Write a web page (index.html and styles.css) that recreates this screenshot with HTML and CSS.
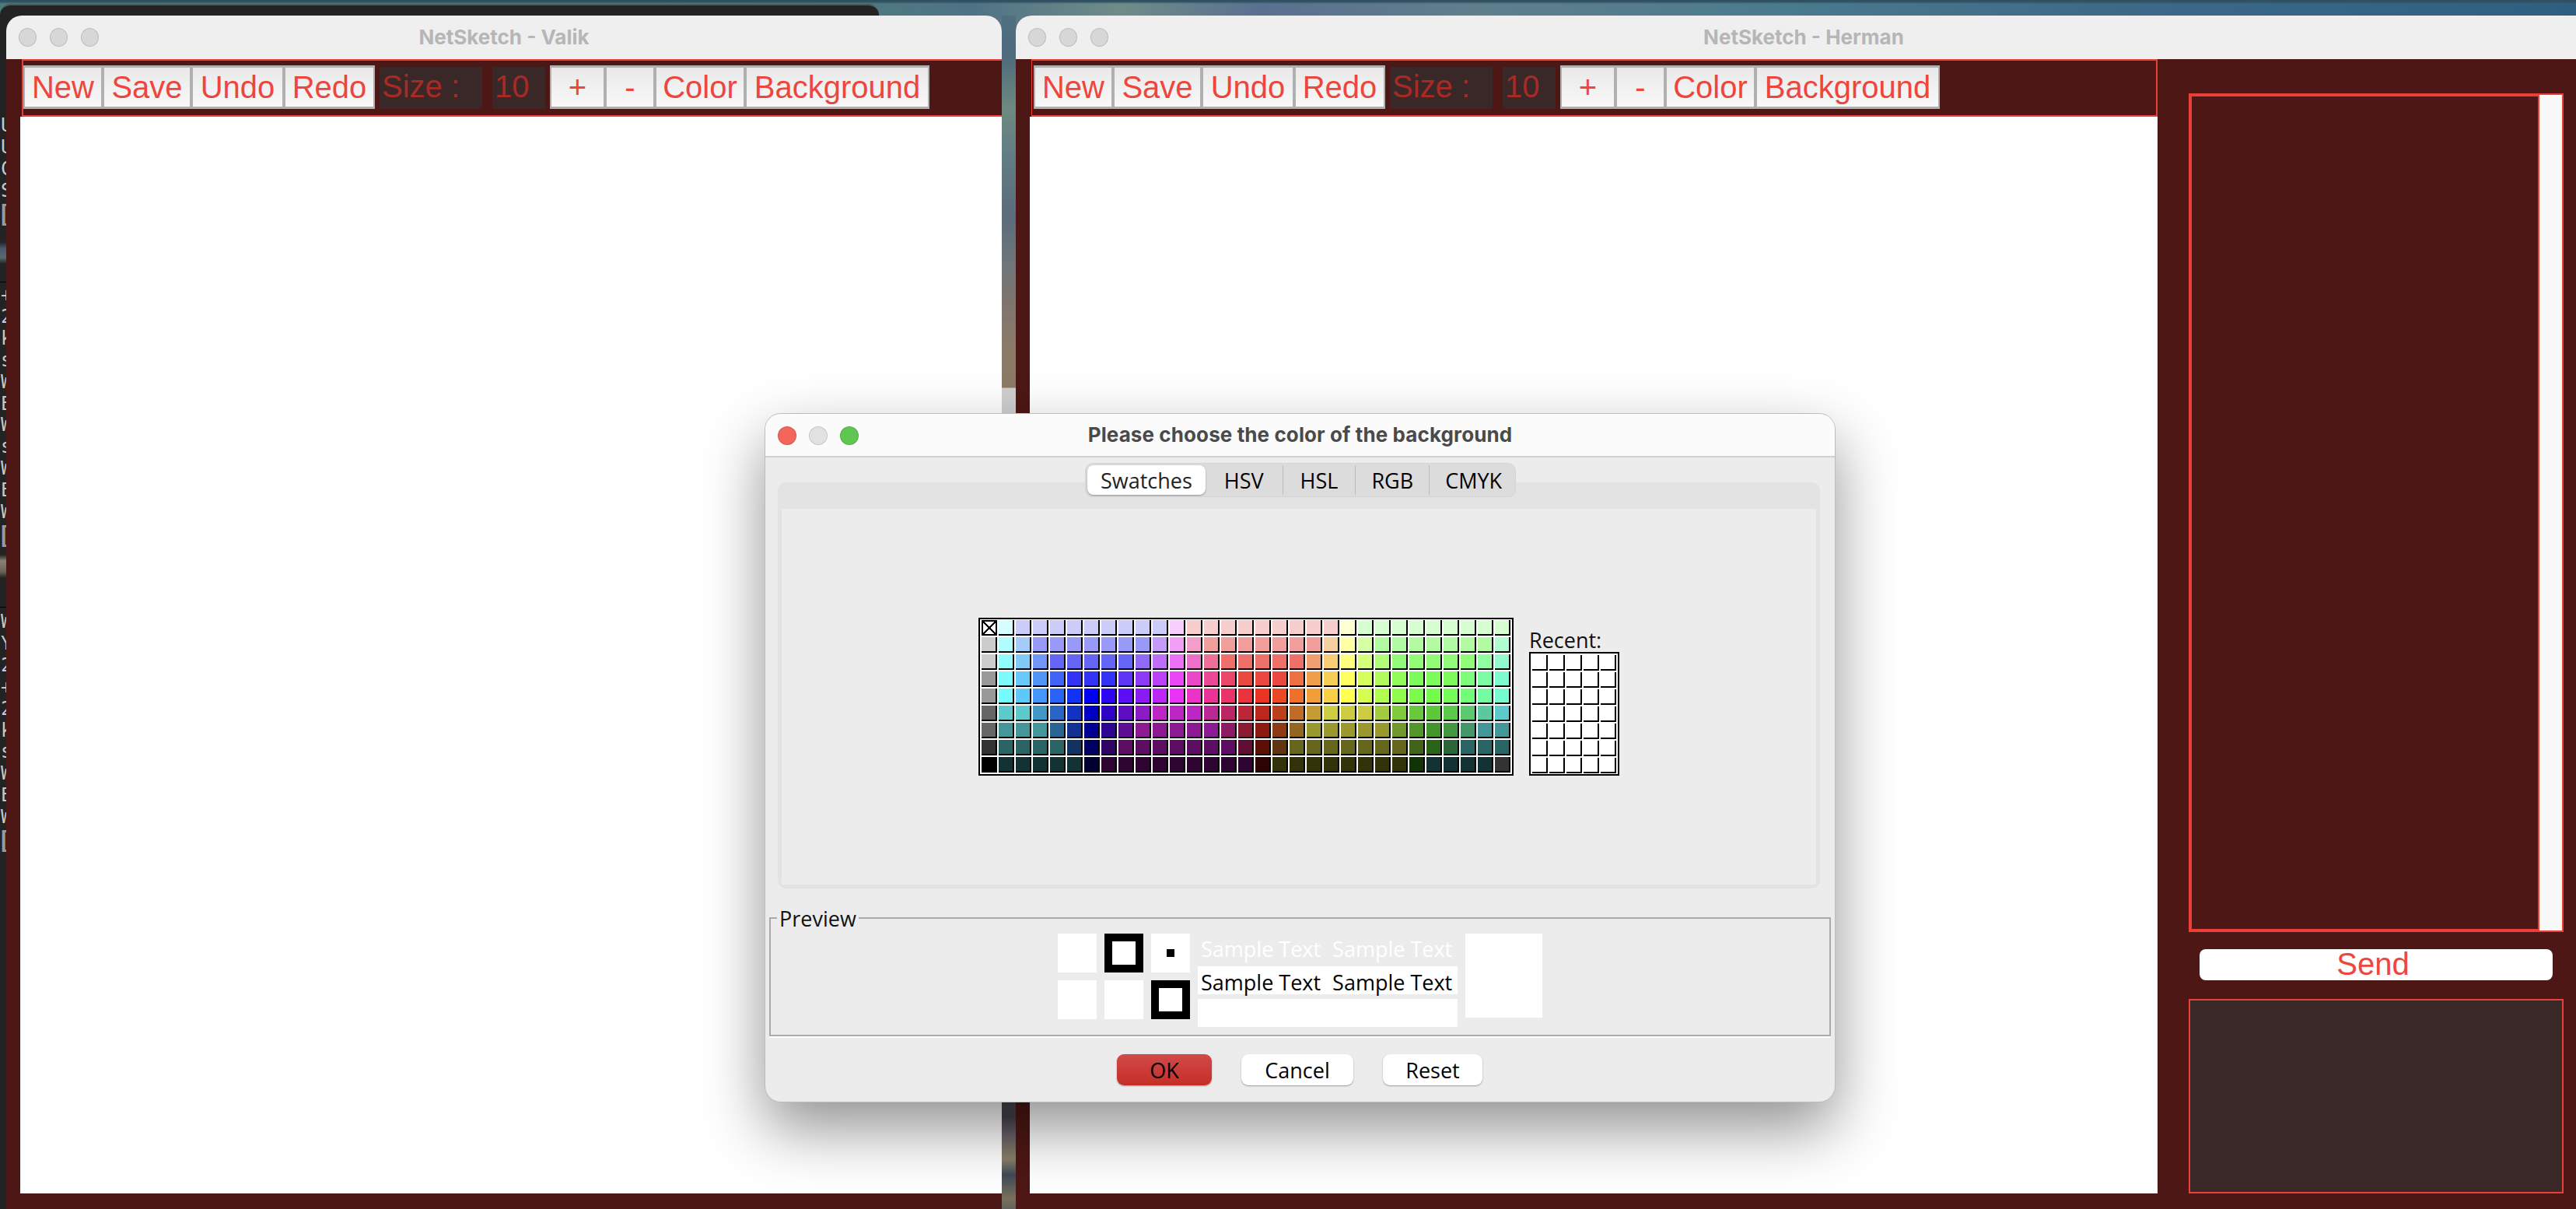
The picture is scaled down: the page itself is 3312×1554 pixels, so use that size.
FILE: index.html
```html
<!DOCTYPE html>
<html lang="en">
<head>
<meta charset="utf-8">
<title>NetSketch</title>
<link rel="stylesheet" href="styles.css">
</head>
<body>
<main class="desktop">
  <div class="gap-sliver"></div>

  <section class="terminal">
    <div class="term-block term-a"><p>U</p><p>U</p><p>C</p><p>S</p><p class="term-bracket">[</p></div>
    <div class="term-strip strip-a"></div>
    <div class="term-block term-b"><p>+</p><p>2</p><p>k</p><p>s</p><p>W</p><p>E</p><p>W</p><p>s</p><p>W</p><p>E</p><p>W</p><p class="term-bracket">[</p></div>
    <div class="term-strip strip-b"></div>
    <div class="term-block term-c"><p>W</p><p>Y</p><p>2</p><p>+</p><p>2</p><p>k</p><p>s</p><p>W</p><p>E</p><p>W</p><p class="term-bracket">[</p></div>
  </section>

  <section class="window window-left">
    <header class="titlebar">
      <div class="lights"><i class="light"></i><i class="light"></i><i class="light"></i></div>
      <h1 class="title">NetSketch - Valik</h1>
    </header>
    <div class="window-body">
      <div class="toolbar toolbar-left">
        <button class="tool w-new">New</button><button class="tool w-save">Save</button><button class="tool w-undo">Undo</button><button class="tool w-redo">Redo</button>
        <span class="label w-size">Size :</span><span class="label w-field">10</span>
        <button class="tool w-plus">+</button><button class="tool w-minus">-</button><button class="tool w-color">Color</button><button class="tool w-bg">Background</button>
      </div>
      <div class="canvas canvas-left"></div>
    </div>
  </section>

  <section class="window window-right">
    <header class="titlebar">
      <div class="lights"><i class="light"></i><i class="light"></i><i class="light"></i></div>
      <h1 class="title">NetSketch - Herman</h1>
    </header>
    <div class="window-body body-right">
      <div class="work">
        <div class="toolbar toolbar-right">
          <button class="tool w-new">New</button><button class="tool w-save">Save</button><button class="tool w-undo">Undo</button><button class="tool w-redo">Redo</button>
          <span class="label w-size">Size :</span><span class="label w-field">10</span>
          <button class="tool w-plus">+</button><button class="tool w-minus">-</button><button class="tool w-color">Color</button><button class="tool w-bg">Background</button>
        </div>
        <div class="canvas"></div>
      </div>
      <aside class="chat">
        <div class="chat-log"><div class="chat-scroll"></div></div>
        <button class="send">Send</button>
        <div class="chat-input"></div>
      </aside>
    </div>
  </section>

  <section class="dialog">
    <header class="dialog-bar">
      <div class="dialog-lights"><i class="dl dl-red"></i><i class="dl dl-grey"></i><i class="dl dl-green"></i></div>
      <h2 class="dialog-title">Please choose the color of the background</h2>
    </header>
    <div class="dialog-body">
      <div class="tab-area">
        <nav class="tabs">
          <span class="tab tab-on">Swatches</span>
          <span class="tab tab-hsv">HSV</span>
          <span class="tab tab-hsl">HSL</span>
          <span class="tab tab-rgb">RGB</span>
          <span class="tab tab-cmyk">CMYK</span>
        </nav>
        <div class="tab-panel">
          <div class="swatch-row">
            <div class="palette" id="palette"></div>
            <div class="recent-col">
              <div class="recent-label">Recent:</div>
              <div class="recent" id="recent"></div>
            </div>
          </div>
        </div>
      </div>
      <fieldset class="preview">
        <legend class="preview-legend">Preview</legend>
        <div class="preview-row">
          <div class="blocks">
            <div class="block"></div>
            <div class="block block-ring"></div>
            <div class="block block-dot"><i></i></div>
            <div class="block"></div>
            <div class="block"></div>
            <div class="block block-ring"></div>
          </div>
          <div class="samples">
            <div class="sample sample-ghost"><span>Sample Text</span><span>Sample Text</span></div>
            <div class="sample sample-white"><span>Sample Text</span><span>Sample Text</span></div>
            <div class="sample sample-blank"></div>
          </div>
          <div class="preview-big"></div>
        </div>
      </fieldset>
      <footer class="actions">
        <button class="act act-ok">OK</button>
        <button class="act act-cancel">Cancel</button>
        <button class="act act-reset">Reset</button>
      </footer>
    </div>
  </section>
</main>
<script src="swatches.js"></script>
</body>
</html>
```

FILE: styles.css
```css
* { box-sizing: border-box; }
html, body { margin: 0; padding: 0; }
body { width: 3312px; height: 1554px; overflow: hidden; background: #3f6a84; }
button { margin: 0; font: inherit; cursor: default; }
h1, h2, p { margin: 0; }

.desktop {
  position: relative; width: 3312px; height: 1554px; overflow: hidden;
  background:
    linear-gradient(#2f5060 0, #2f5060 2px, transparent 5px),
    linear-gradient(90deg, #4a7c78 0, #4e7a80 1100px, #4f7386 1250px, #6f8c88 1440px, #5b7090 1620px, #5f7f8c 1900px, #4a7a8e 2300px, #3e6a88 2700px, #2f5f80 3312px);
}
.gap-sliver {
  position: absolute; left: 1288px; top: 20px; width: 18px; height: 1534px;
  background: linear-gradient(#4f7080 0, #4e6a7c 50px, #6e8a80 120px, #627c84 180px, #5c6c7a 260px, #70767a 320px, #7c7470 360px, #8a7a68 420px, #8c7a66 478px, #cfcfcf 479px, #d0d0d0 532px, #46424c 1416px, #6a6468 1440px, #8a8168 1470px, #3f4a58 1490px, #7a705c 1520px, #3f5060 1554px);
}

/* terminal behind the left window */
.terminal {
  position: absolute; left: 0; top: 5px; width: 1130px; height: 1549px;
  background: #232323; border-top: 2px solid #555; border-radius: 14px 14px 0 0;
  overflow: hidden;
  font: 24px/27.9px "DejaVu Sans Mono", monospace; color: #c8c8c8;
}
.term-block { position: absolute; left: 1px; }
.term-a { top: 141px; }
.term-b { top: 359px; }
.term-c { top: 779px; }
.term-bracket { font: 700 30px/27.9px "Liberation Sans", Arial, sans-serif; color: #9a9a9a; }
.term-strip { position: absolute; left: 0; width: 8px; height: 70px; border-bottom: 1px solid #000; background: linear-gradient(#232323 0, #232323 18px, #46586a 26px, #5a6a72 38px, #232323 46px, #232323 100%); }
.strip-a { top: 286px; }
.strip-b { top: 704px; background: linear-gradient(#232323 0, #232323 2px, #8a8272 10px, #6a6258 24px, #232323 32px, #232323 100%); }

/* application windows */
.window {
  position: absolute; top: 20px; height: 1534px; overflow: hidden;
  display: flex; flex-direction: column; border-radius: 20px 20px 0 0; background: #4d1715;
}
.window-left { left: 8px; width: 1280px; }
.window-right { left: 1306px; width: 2026px; }
.titlebar {
  position: relative; flex: none; height: 56px; background: #efefef;
  display: flex; align-items: center; justify-content: center;
}
.title { font: 700 26px/1 Inter, "Liberation Sans", sans-serif; color: #b6b6b6; }
.lights { position: absolute; left: 16px; top: 16px; display: flex; gap: 17px; }
.light { display: block; width: 23px; height: 24px; border-radius: 50%; background: #d7d7d7; border: 1px solid #bdbdbd; }

.window-body { flex: 1; min-height: 0; display: flex; flex-direction: column; padding: 0 0 20px 18px; }
.body-right { flex-direction: row; }
.work { width: 1450px; display: flex; flex-direction: column; }

.toolbar {
  flex: none; height: 74px; display: flex; align-items: flex-start; width: max-content; min-width: 100%;
  padding: 6px 0 0; border: 2px solid #ea4037; background: #4d1715;
}
.toolbar-left { margin-left: 2px; width: 1300px; flex: none; }
.toolbar-right { margin-left: 2px; width: 1448px; min-width: 0; border-left-width: 1px; padding-left: 2px; }
.tool {
  height: 56px; padding: 0; border: 3px solid #b0b0b0; flex: none; margin-right: 0;
  background: linear-gradient(#e9e9e9, #f8f8f8);
  font: 40px/46px "Liberation Sans", Arial, sans-serif; color: #ee453d;
  border-left-width: 2px; border-right-width: 2px;
}
.label {
  flex: none; height: 54px; margin-top: 2px; background: #3a2828;
  font: 40px/50px "Liberation Sans", Arial, sans-serif; color: #a82a24; padding-left: 3px; white-space: nowrap;
}
.w-new { width: 102px; }
.w-save { width: 114px; }
.w-undo { width: 119px; }
.w-redo { width: 117px; }
.w-size { width: 132px; margin-left: 6px; }
.w-field { width: 68px; margin-left: 13px; margin-right: 6px; }
.w-plus { width: 71px; }
.w-minus { width: 64px; }
.w-color { width: 116px; }
.w-bg { width: 237px; }

.canvas { flex: 1; background: #fff; }
.canvas-left { margin-right: 0; }

/* chat side panel */
.chat { width: 522px; padding: 44px 0 0 40px; display: flex; flex-direction: column; align-items: flex-start; }
.chat-log {
  width: 482px; height: 1078px; background: #4d1715;
  border: solid #ea4037; border-width: 4px 2px 4px 4px; display: flex; justify-content: flex-end;
}
.chat-scroll { width: 31px; background: #f8f8f8; border-left: 2px solid #ea4037; margin-top: -2px; margin-bottom: -2px; }
.send {
  width: 454px; height: 40px; margin: 22px 0 24px 14px; padding: 0 8px 2px 0; border: 0; border-radius: 8px; background: #fff;
  font: 40px/36px "Liberation Sans", Arial, sans-serif; color: #ee453d;
}
.chat-input { width: 482px; height: 250px; background: #3a2828; border: 2px solid #ea4037; }

/* colour chooser dialog */
.dialog {
  position: absolute; left: 984px; top: 532px; width: 1375px; height: 884px;
  display: flex; flex-direction: column; border-radius: 20px; overflow: hidden;
  background: #ececec; box-shadow: 0 0 0 1px #bdbdbd, 0 34px 80px 0 rgba(0,0,0,.44);
}
.dialog-bar {
  position: relative; flex: none; height: 56px; background: #fbfbfb; border-bottom: 2px solid #d2d2d2;
  display: flex; align-items: center; justify-content: center;
}
.dialog-title { font: 700 26px/1 Inter, "Liberation Sans", sans-serif; letter-spacing: .1px; color: #4a4a4a; }
.dialog-lights { position: absolute; left: 16px; top: 16px; display: flex; gap: 16px; }
.dl { display: block; width: 24px; height: 24px; border-radius: 50%; border: 1px solid rgba(0,0,0,.12); }
.dl-red { background: #f2665c; }
.dl-grey { background: #e2e2e2; }
.dl-green { background: #61c554; }

.dialog-body { flex: 1; min-height: 0; display: flex; flex-direction: column; padding: 7px 5px 0; }
.tab-area { position: relative; height: 547px; flex: none; padding: 25px 14px 0 11px; }
.tabs {
  position: absolute; z-index: 1; left: 406px; top: 0; width: 554px; height: 44px; padding: 2px;
  display: flex; align-items: center; background: #dcdcdc; border-radius: 10px; border: 1px solid #d4d4d4;
  font: 27px/1 "Open Sans", "Noto Sans", sans-serif; color: #000;
}
.tab { height: 38px; display: flex; align-items: center; justify-content: center; border-right: 1px solid #bdbdbd; }
.tab-on { width: 152px; background: #fff; border: 0; border-radius: 8px; box-shadow: 0 1px 2px rgba(0,0,0,.35); color: #222; }
.tab-hsv { width: 100px; }
.tab-hsl { width: 94px; }
.tab-rgb { width: 95px; }
.tab-cmyk { width: 108px; border-right: 0; padding-left: 5px; }
.tab-panel {
  height: 522px; padding: 34px 5px 5px; background: #e3e3e3; border-radius: 10px;
}
.swatch-row {
  height: 483px; background: #ececec; display: flex; align-items: flex-start;
  padding: 140px 0 0 253px; gap: 20px;
}
.palette, .recent { display: grid; grid-auto-rows: 22px; grid-template-columns: repeat(31, 22px); background: #fff; border: 2px solid #000; padding: 1px 0 0 2px; }
.palette { width: 688px; height: 203px; }
.recent { grid-template-columns: repeat(5, 22px); width: 116px; height: 159px; padding-top: 2px; }
.recent-col { display: flex; flex-direction: column; }
.recent-label { height: 44px; padding: 15px 0 0; font: 27px/27px "Open Sans", "Noto Sans", sans-serif; color: #111; }
.cell { display: block; width: 20px; height: 20px; border-right: 2px solid #000; border-bottom: 2px solid #000; }
.cell-x {
  border: 2px solid #000;
  background:
    linear-gradient(45deg, transparent 45%, #000 45%, #000 55%, transparent 55%),
    linear-gradient(-45deg, transparent 45%, #000 45%, #000 55%, transparent 55%),
    #fff;
}

.preview {
  margin: 24px 0 0; padding: 0; min-width: 0; width: 1365px; height: 166px; flex: none;
  border: 2px solid #aaa; box-shadow: 0 2px 0 #fff; position: relative;
}
.preview-legend {
  margin-left: 8px; padding: 2px 3px 0; font: 27px/26px "Open Sans", "Noto Sans", sans-serif; color: #111;
}
.preview-row { display: flex; align-items: flex-start; padding: 6px 0 0 369px; }
.blocks { display: grid; grid-template-columns: repeat(3, 50px); grid-auto-rows: 50px; gap: 10px; width: 170px; }
.block { background: #fff; display: flex; align-items: center; justify-content: center; }
.block-ring { background: #fff; border: 10px solid #000; }
.block-dot i { display: block; width: 10px; height: 10px; background: #000; }
.samples { width: 334px; margin-left: 10px; display: flex; flex-direction: column; }
.sample {
  display: flex; gap: 15px; height: 36px; padding: 0 0 0 4px; align-items: center;
  font: 27px/1 "Open Sans", "Noto Sans", sans-serif; color: #000; white-space: nowrap;
}
.sample-ghost { margin-top: 1px; margin-bottom: 5px; color: #fff; background: transparent; }
.sample-white { background: #fff; padding-top: 5px; }
.sample-blank { background: #fff; margin-top: 6px; }
.preview-big { width: 99px; height: 108px; margin-left: 10px; background: #fff; }

.actions { flex: 1; display: flex; align-items: flex-start; padding: 23px 0 0 447px; }
.act {
  height: 40px; padding: 0; border: 0; border-radius: 9px; background: #fff;
  font: 27px/1 "Open Sans", "Noto Sans", sans-serif; color: #000;
  box-shadow: 0 1px 2px rgba(0,0,0,.35);
}
.act-ok { width: 122px; background: linear-gradient(#d24a4a, #c42e27); margin-right: 38px; }
.act-cancel { width: 144px; margin-right: 38px; }
.act-reset { width: 128px; }
```

FILE: swatches.js
```js
// Swing's default swatch table, written as run-length rows of web-safe colours.
var ROWS = [
  "fff cff ccf*9 fcf fcc*9 ffc cfc*9",
  "ccc 9ff 9cf 99f*7 c9f f9f f9c f99*7 fc9 ff9 cf9 9f9*7 9fc",
  "ccc 6ff 6cf 69f 66f*5 96f c6f f6f f6c f69 f66*5 f96 fc6 ff6 cf6 9f6 6f6*5 6f9 6fc",
  "999 3ff 3cf 39f 36f 33f*3 63f 93f c3f f3f f3c f39 f36 f33*3 f63 f93 fc3 ff3 cf3 9f3 6f3 3f3*3 3f6 3f9 3fc",
  "999 0ff 0cf 09f 06f 03f 00f 30f 60f 90f c0f f0f f0c f09 f06 f03 f00 f30 f60 f90 fc0 ff0 cf0 9f0 6f0 3f0 0f0 0f3 0f6 0f9 0fc",
  "666 0cc*2 09c 06c 03c 00c 30c 60c 90c c0c*3 c09 c06 c03 c00 c30 c60 c90 cc0*3 9c0 6c0 3c0 0c0 0c3 0c6 0c9 0cc",
  "666 099*3 069 039 009 309 609 909*5 906 903 900 930 960 990*5 690 390 090 093 096 099*2",
  "333 066*4 036 006 306 606*7 603 600 630 660*7 360 060 063 066*3",
  "000 033*5 003 303*9 300 330*8 030 033*4 333"
];

// The screenshot was taken on a wide-gamut display, so sRGB values appear in Display P3.
function lin(v) { return v <= 0.04045 ? v / 12.92 : Math.pow((v + 0.055) / 1.055, 2.4); }
function enc(v) { return v <= 0.0031308 ? v * 12.92 : 1.055 * Math.pow(v, 1 / 2.4) - 0.055; }
function toDisplay(hex) {
  var r = lin(parseInt(hex[0], 16) * 17 / 255);
  var g = lin(parseInt(hex[1], 16) * 17 / 255);
  var b = lin(parseInt(hex[2], 16) * 17 / 255);
  var out = [
    0.8225 * r + 0.1774 * g,
    0.0332 * r + 0.9669 * g,
    0.0171 * r + 0.0724 * g + 0.9108 * b
  ];
  return "rgb(" + out.map(function (c) { return Math.round(enc(c) * 255); }).join(",") + ")";
}
function addCell(parent, colour, extra) {
  var el = document.createElement("i");
  el.className = "cell" + (extra ? " " + extra : "");
  if (colour) el.style.backgroundColor = colour;
  parent.appendChild(el);
}

var palette = document.getElementById("palette");
ROWS.forEach(function (row, y) {
  var x = 0;
  row.split(" ").forEach(function (token) {
    var parts = token.split("*");
    var count = Number(parts[1] || 1);
    for (var i = 0; i < count; i++) {
      if (x === 0 && y === 0) addCell(palette, "", "cell-x");
      else addCell(palette, toDisplay(parts[0]));
      x++;
    }
  });
});

var recent = document.getElementById("recent");
for (var n = 0; n < 35; n++) addCell(recent, "#fff");
```
